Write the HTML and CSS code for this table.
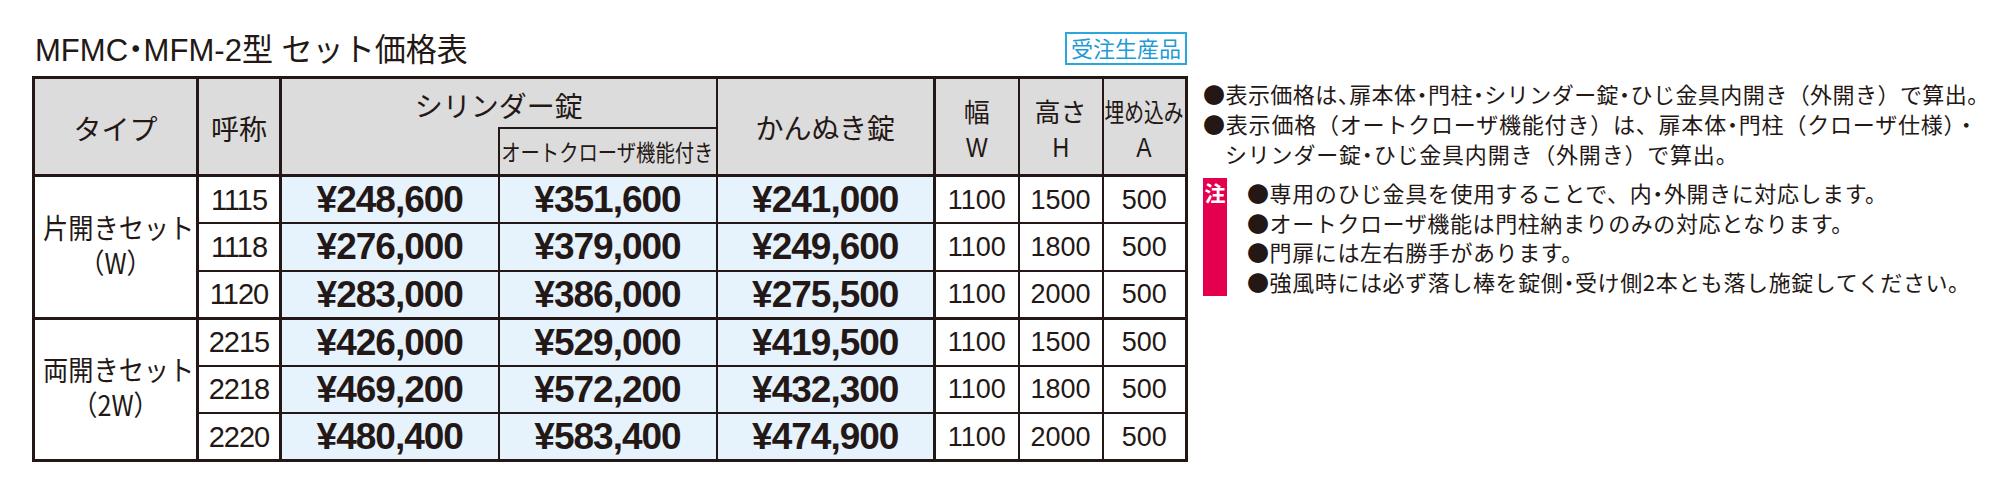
FILE: index.html
```html
<!DOCTYPE html>
<html lang="ja">
<head>
<meta charset="utf-8">
<title>MFMC・MFM-2型 セット価格表</title>
<link rel="stylesheet" href="styles.css">
</head>
<body>
<div class="page">
  <div class="main">
    <div class="titlebar">
      <h1 class="title"><span class="title-in">MFMC<span class="hw">・</span>MFM-2型 セット価格表</span></h1>
      <span class="badge">受注生産品</span>
    </div>
    <table class="price">
      <colgroup>
        <col class="c-type"><col class="c-code"><col class="c-price"><col class="c-price"><col class="c-price"><col class="c-dim"><col class="c-dim"><col class="c-dim">
      </colgroup>
      <thead>
        <tr class="hrow">
          <th class="th th-type">タイプ</th>
          <th class="th th-code">呼称</th>
          <th colspan="2" class="th th-cyl">
            <div class="cyl">
              <div class="cyl-top">シリンダー錠</div>
              <div class="cyl-bot"><div class="auto"><span class="sq2">オートクローザ機能付き</span></div></div>
            </div>
          </th>
          <th class="th th-kan">かんぬき錠</th>
          <th class="th th-dim"><span class="dj">幅</span><br><span class="dl">W</span></th>
          <th class="th th-dim"><span class="dj">高さ</span><br><span class="dl">H</span></th>
          <th class="th th-dim"><span class="dj sq">埋め込み</span><br><span class="dl">A</span></th>
        </tr>
      </thead>
      <tbody class="grp">
        <tr>
          <td rowspan="3" class="type"><span class="tl">片開きセット</span><span class="tl">（W）</span></td>
          <td class="code">1115</td>
          <td class="yen">¥248,600</td><td class="yen">¥351,600</td><td class="yen yen-last">¥241,000</td>
          <td class="dim">1100</td><td class="dim">1500</td><td class="dim">500</td>
        </tr>
        <tr>
          <td class="code">1118</td>
          <td class="yen">¥276,000</td><td class="yen">¥379,000</td><td class="yen yen-last">¥249,600</td>
          <td class="dim">1100</td><td class="dim">1800</td><td class="dim">500</td>
        </tr>
        <tr>
          <td class="code">1120</td>
          <td class="yen">¥283,000</td><td class="yen">¥386,000</td><td class="yen yen-last">¥275,500</td>
          <td class="dim">1100</td><td class="dim">2000</td><td class="dim">500</td>
        </tr>
      </tbody>
      <tbody class="grp grp2">
        <tr>
          <td rowspan="3" class="type"><span class="tl">両開きセット</span><span class="tl">（2W）</span></td>
          <td class="code">2215</td>
          <td class="yen">¥426,000</td><td class="yen">¥529,000</td><td class="yen yen-last">¥419,500</td>
          <td class="dim">1100</td><td class="dim">1500</td><td class="dim">500</td>
        </tr>
        <tr>
          <td class="code">2218</td>
          <td class="yen">¥469,200</td><td class="yen">¥572,200</td><td class="yen yen-last">¥432,300</td>
          <td class="dim">1100</td><td class="dim">1800</td><td class="dim">500</td>
        </tr>
        <tr>
          <td class="code">2220</td>
          <td class="yen">¥480,400</td><td class="yen">¥583,400</td><td class="yen yen-last">¥474,900</td>
          <td class="dim">1100</td><td class="dim">2000</td><td class="dim">500</td>
        </tr>
      </tbody>
    </table>
  </div>
  <div class="notes">
    <ul class="bul top">
      <li class="n1">●表示価格は<span class="hw">、</span>扉本体<span class="hw">・</span>門柱<span class="hw">・</span>シリンダー錠<span class="hw">・</span>ひじ金具内開き（外開き）で算出<span class="hw">。</span></li>
      <li class="n2">●表示価格（オートクローザ機能付き）は、扉本体<span class="hw">・</span>門柱（クローザ仕様）・<br>シリンダー錠<span class="hw">・</span>ひじ金具内開き（外開き）で算出<span class="hw">。</span></li>
    </ul>
    <div class="caution">
      <span class="mark">注</span>
      <ul class="bul cau">
        <li>●専用のひじ金具を使用することで、内<span class="hw">・</span>外開きに対応します。</li>
        <li>●オートクローザ機能は門柱納まりのみの対応となります。</li>
        <li>●門扉には左右勝手があります。</li>
        <li>●強風時には必ず落し棒を錠側<span class="hw">・</span>受け側2本とも落し施錠してください。</li>
      </ul>
    </div>
  </div>
</div>
</body>
</html>
```
FILE: styles.css
```css
html, body {
  margin: 0;
  padding: 0;
  background: #ffffff;
}
body {
  color: #231815;
  font-family: "Noto Sans CJK JP", sans-serif;
}
.page {
  display: flex;
  align-items: flex-start;
  padding: 32px 0 0 32px;
  gap: 16px;
}
.main {
  width: 1155px;
  flex: none;
}
.titlebar {
  display: flex;
  justify-content: space-between;
  align-items: flex-start;
  height: 33px;
  margin-bottom: 11px;
}
.title {
  margin: 0 0 0 3px;
  padding-top: 2px;
  font-weight: 400;
  font-size: 32px;
  line-height: 33px;
  font-family: "Liberation Sans", "Noto Sans CJK JP", sans-serif;
  white-space: nowrap;
}
.title-in {
  display: inline-block;
  transform: scaleX(0.97);
  transform-origin: left center;
}
.hw {
  font-feature-settings: "halt" 1;
}
.badge {
  box-sizing: border-box;
  height: 33px;
  border: 2.5px solid #2ca6df;
  color: #1f9bd7;
  font-size: 22px;
  line-height: 27px;
  padding: 0 4px;
  white-space: nowrap;
}

/* table */
.price {
  border-collapse: collapse;
  table-layout: fixed;
  width: 1155px;
  border: 3px solid #231815;
}
.c-type { width: 164px; }
.c-code { width: 83px; }
.c-price { width: 218px; }
.c-dim { width: 84px; }
.price th, .price td {
  border: 2px solid #231815;
  padding: 0;
  text-align: center;
  vertical-align: middle;
  white-space: nowrap;
  overflow: hidden;
}
.price .th {
  background: #dcdcdc;
  font-weight: 400;
  font-size: 28px;
  line-height: 1.2;
  border-bottom-width: 3px;
}
.hrow { height: 98px; }
.price .th-type,
.price .th-code {
  border-right-width: 3px;
  padding-top: 4px;
}
.cyl {
  display: flex;
  flex-direction: column;
  height: 95px;
}
.cyl-top {
  height: 48px;
  line-height: 48px;
  padding-top: 2px;
  box-sizing: border-box;
}
.cyl-bot {
  flex: 1;
  display: flex;
  justify-content: flex-end;
}
.auto {
  box-sizing: border-box;
  width: calc(50% + 1px);
  border-top: 2px solid #231815;
  border-left: 2px solid #231815;
  display: flex;
  align-items: center;
  justify-content: center;
}
.price .th-kan {
  border-right-width: 3px;
  padding-top: 2px;
}
.price .th-dim {
  line-height: 34px;
  padding-top: 4px;
}
.sq2 {
  display: inline-block;
  font-size: 23px;
  line-height: 1.2;
  transform: scaleX(0.84);
  transform-origin: center;
  margin: 0 -20px;
}
.dj { font-size: 26px; display: inline-block; }
.sq {
  transform: scaleX(0.76);
  margin: 0 -12px;
  font-size: 26px;
}
.dl {
  font-family: "Liberation Sans", sans-serif;
  font-size: 27px;
  display: inline-block;
  transform: scaleX(0.85);
}

tbody tr { height: 47.5px; }
.price .grp2 tr:first-child td { border-top-width: 3px; }
.price .type {
  background: #ffffff;
  border-right-width: 3px;
  font-size: 28px;
  padding-bottom: 4px;
}
.tl {
  display: block;
  height: 35px;
  line-height: 35px;
  transform: scaleX(0.9);
}
.price .code {
  border-right-width: 3px;
  font-family: "Liberation Sans", sans-serif;
  font-size: 29px;
  letter-spacing: -1px;
  padding-top: 1px;
}
.price .yen {
  background: #e6f2fc;
  font-family: "Liberation Sans", sans-serif;
  font-weight: 700;
  font-size: 37px;
  letter-spacing: -1px;
  padding-top: 1px;
}
.price .yen-last { border-right-width: 3px; }
.price .dim {
  font-family: "Liberation Sans", sans-serif;
  font-size: 27px;
  padding-top: 1px;
}

/* notes */
.notes {
  margin-top: 46px;
  font-size: 22px;
  line-height: 30px;
  white-space: nowrap;
}
.bul {
  list-style: none;
  margin: 0;
  padding: 0;
}
.bul li {
  padding-left: 1em;
  text-indent: -1em;
}
.n1 { letter-spacing: 0.45px; }
.n2 { letter-spacing: 0.8px; }
.caution {
  display: flex;
  align-items: stretch;
  margin-top: 10px;
}
.mark {
  flex: none;
  width: 24px;
  background: #e4004f;
  color: #ffffff;
  font-weight: 700;
  font-size: 21px;
  line-height: 28px;
  text-align: center;
  padding-bottom: 4px;
}
.cau {
  margin-left: 20px;
  line-height: 29.5px;
  letter-spacing: 0.6px;
}
```
